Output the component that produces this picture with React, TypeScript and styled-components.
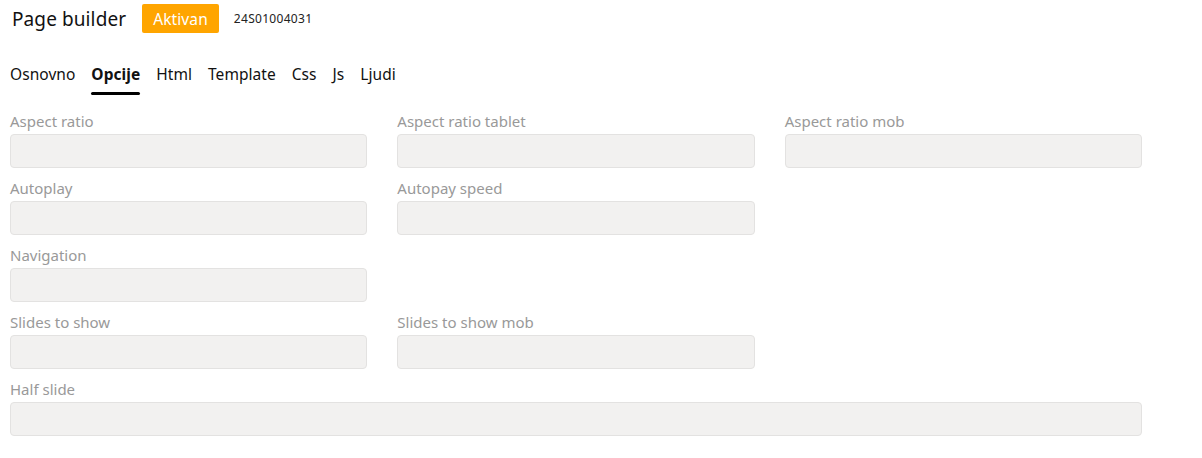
import styled, { createGlobalStyle } from "styled-components";

const GlobalStyle = createGlobalStyle`
  body {
    margin: 0;
    background: #fff;
    font-family: "Noto Sans", "Open Sans", sans-serif;
    color: #111;
  }
`;

interface Field {
  label: string;
  wide?: boolean;
}

const ROWS: (Field | null)[][] = [
  [{ label: "Aspect ratio" }, { label: "Aspect ratio tablet" }, { label: "Aspect ratio mob" }],
  [{ label: "Autoplay" }, { label: "Autopay speed" }, null],
  [{ label: "Navigation" }, null, null],
  [{ label: "Slides to show" }, { label: "Slides to show mob" }, null],
  [{ label: "Half slide", wide: true }],
];

const TABS = ["Osnovno", "Opcije", "Html", "Template", "Css", "Js", "Ljudi"];

const App = () => {
  return (
    <Page>
      <GlobalStyle />
      <Header>
        <Title>Page builder</Title>
        <Badge>Aktivan</Badge>
        <Code>24S01004031</Code>
      </Header>
      <Tabs>
        {TABS.map((t) => (
          <Tab key={t} $active={t === "Opcije"}>
            {t}
          </Tab>
        ))}
      </Tabs>
      <Form>
        {ROWS.flat().map((f, i) =>
          f ? (
            <FieldBox key={i} $wide={f.wide}>
              <Label>{f.label}</Label>
              <Input type="text" />
            </FieldBox>
          ) : (
            <div key={i} />
          )
        )}
      </Form>
    </Page>
  );
};

export default App;

const Page = styled.div`
  width: 1132px;
  padding: 4px 0 20px 10px;
`;

const Header = styled.div`
  display: flex;
  align-items: center;
  height: 29px;
`;

const Title = styled.h1`
  margin: 0 16px 0 2px;
  font-size: 19px;
  font-weight: 400;
  letter-spacing: 0.1px;
`;

const Badge = styled.span`
  display: inline-flex;
  align-items: center;
  height: 29px;
  padding: 0 11px;
  background: #ffa500;
  color: #fff;
  font-size: 15.5px;
  letter-spacing: 0.1px;
  border-radius: 2px;
`;

const Code = styled.span`
  margin-left: 15px;
  font-size: 12px;
  color: #222;
  letter-spacing: 0.3px;
`;

const Tabs = styled.div`
  display: flex;
  gap: 16px;
  margin-top: 30px;
`;

const Tab = styled.div<{ $active?: boolean }>`
  position: relative;
  font-size: 15.5px;
  letter-spacing: 0.05px;
  font-weight: ${(p) => (p.$active ? 700 : 400)};
  padding-bottom: 10px;
  &::after {
    content: "";
    position: absolute;
    left: 0;
    right: 0;
    bottom: 0;
    height: 3px;
    border-radius: 2px;
    background: ${(p) => (p.$active ? "#000" : "transparent")};
  }
`;

const Form = styled.div`
  display: grid;
  grid-template-columns: repeat(3, 1fr);
  column-gap: 30px;
  row-gap: 12px;
  margin-top: 18px;
`;

const FieldBox = styled.div<{ $wide?: boolean }>`
  display: flex;
  flex-direction: column;
  gap: 5px;
  grid-column: ${(p) => (p.$wide ? "1 / -1" : "auto")};
`;

const Label = styled.label`
  font-size: 15px;
  color: #999;
  line-height: 16px;
`;

const Input = styled.input`
  box-sizing: border-box;
  height: 34px;
  width: 100%;
  margin: 0;
  background: #f2f1f0;
  border: 1px solid #e3e2e1;
  border-radius: 4px;
  outline: none;
`;
